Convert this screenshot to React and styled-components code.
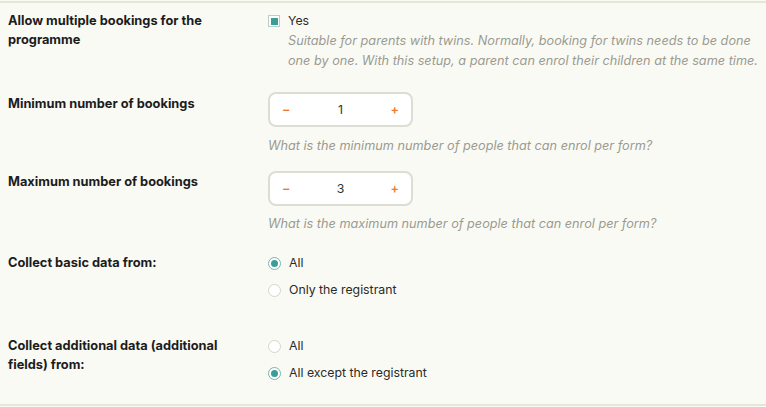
import { useState } from "react"
import styled, { createGlobalStyle } from "styled-components"

const GlobalStyle = createGlobalStyle`
  html, body {
    margin: 0;
    padding: 0;
    background: #fafaf4;
  }
  body {
    font-family: Inter, "Noto Sans", sans-serif;
    color: #1f1f1f;
  }
`

const Panel = styled.section`
  margin-top: 1px;
  border-top: 2px solid #e6e6d6;
  border-bottom: 2px solid #e6e6d6;
  background: #fafaf4;
  height: 405px;
  box-sizing: border-box;
  padding: 0 8px;
`

const Row = styled.div`
  display: grid;
  grid-template-columns: 260px 1fr;
  padding-top: ${(p) => p.$top}px;
`

const Label = styled.div`
  font-size: 12.8px;
  font-weight: 700;
  line-height: 19px;
  color: #1c1c1c;
  padding-top: ${(p) => p.$offset || 0}px;
  max-width: 228px;
`

const Control = styled.div`
  display: flex;
  flex-direction: column;
`

const Hint = styled.p`
  margin: ${(p) => p.$top || 0}px 0 0 ${(p) => p.$indent || 0}px;
  font-size: 12.7px;
  font-style: italic;
  line-height: 19.5px;
  color: #9a9a92;
`

const CheckLine = styled.label`
  display: flex;
  align-items: center;
  gap: 8px;
  font-size: 12.3px;
  line-height: 20px;
  color: #2a2a2a;
  cursor: pointer;
`

const CheckBox = styled.span`
  width: 12px;
  height: 12px;
  box-sizing: border-box;
  border: 1.5px solid #b9cfcb;
  display: flex;
  align-items: center;
  justify-content: center;
  background: #fff;

  &::after {
    content: "";
    width: 7px;
    height: 7px;
    background: ${(p) => (p.$checked ? "#3a9e98" : "transparent")};
  }
`

const Stepper = styled.div`
  width: 145px;
  height: 35px;
  box-sizing: border-box;
  border: 2px solid #ddddd3;
  border-radius: 8px;
  background: #fff;
  display: flex;
  align-items: center;
  justify-content: space-between;
  padding: 0 8px;
`

const StepButton = styled.button`
  border: 0;
  background: none;
  padding: 0 4px;
  font-family: inherit;
  font-size: 12.5px;
  font-weight: 600;
  color: #f07a2c;
  cursor: pointer;
`

const StepValue = styled.span`
  font-size: 12.3px;
  color: #333;
`

const RadioList = styled.div`
  display: flex;
  flex-direction: column;
  gap: 7px;
`

const RadioLine = styled.label`
  display: flex;
  align-items: center;
  gap: 8px;
  font-size: 12.3px;
  line-height: 20px;
  color: #2a2a2a;
  cursor: pointer;
`

const RadioDot = styled.span`
  width: 13px;
  height: 13px;
  box-sizing: border-box;
  border-radius: 50%;
  border: 1.5px solid ${(p) => (p.$checked ? "#6fb8b3" : "#d6d6d0")};
  background: #fff;
  display: flex;
  align-items: center;
  justify-content: center;

  &::after {
    content: "";
    width: 7px;
    height: 7px;
    border-radius: 50%;
    background: ${(p) => (p.$checked ? "#3a9e98" : "transparent")};
  }
`

function NumberStepper({ value, onChange }) {
  return (
    <Stepper>
      <StepButton onClick={() => onChange(Math.max(1, value - 1))}>−</StepButton>
      <StepValue>{value}</StepValue>
      <StepButton onClick={() => onChange(value + 1)}>+</StepButton>
    </Stepper>
  )
}

function RadioGroup({ options, value, onChange }) {
  return (
    <RadioList>
      {options.map((opt) => (
        <RadioLine key={opt} onClick={() => onChange(opt)}>
          <RadioDot $checked={value === opt} />
          {opt}
        </RadioLine>
      ))}
    </RadioList>
  )
}

export default function App() {
  const [multiple, setMultiple] = useState(true)
  const [min, setMin] = useState(1)
  const [max, setMax] = useState(3)
  const [basic, setBasic] = useState("All")
  const [extra, setExtra] = useState("All except the registrant")

  return (
    <>
      <GlobalStyle />
      <Panel>
        <Row $top={8}>
          <Label>Allow multiple bookings for the programme</Label>
          <Control>
            <CheckLine onClick={() => setMultiple(!multiple)}>
              <CheckBox $checked={multiple} />
              Yes
            </CheckLine>
            <Hint $indent={20}>
              Suitable for parents with twins. Normally, booking for twins needs to be done one by one. With
              this setup, a parent can enrol their children at the same time.
            </Hint>
          </Control>
        </Row>

        <Row $top={22}>
          <Label $offset={2}>Minimum number of bookings</Label>
          <Control>
            <NumberStepper value={min} onChange={setMin} />
            <Hint $top={9}>What is the minimum number of people that can enrol per form?</Hint>
          </Control>
        </Row>

        <Row $top={15}>
          <Label $offset={1}>Maximum number of bookings</Label>
          <Control>
            <NumberStepper value={max} onChange={setMax} />
            <Hint $top={8}>What is the maximum number of people that can enrol per form?</Hint>
          </Control>
        </Row>

        <Row $top={20}>
          <Label>Collect basic data from:</Label>
          <RadioGroup options={["All", "Only the registrant"]} value={basic} onChange={setBasic} />
        </Row>

        <Row $top={36}>
          <Label>Collect additional data (additional fields) from:</Label>
          <RadioGroup options={["All", "All except the registrant"]} value={extra} onChange={setExtra} />
        </Row>
      </Panel>
    </>
  )
}
